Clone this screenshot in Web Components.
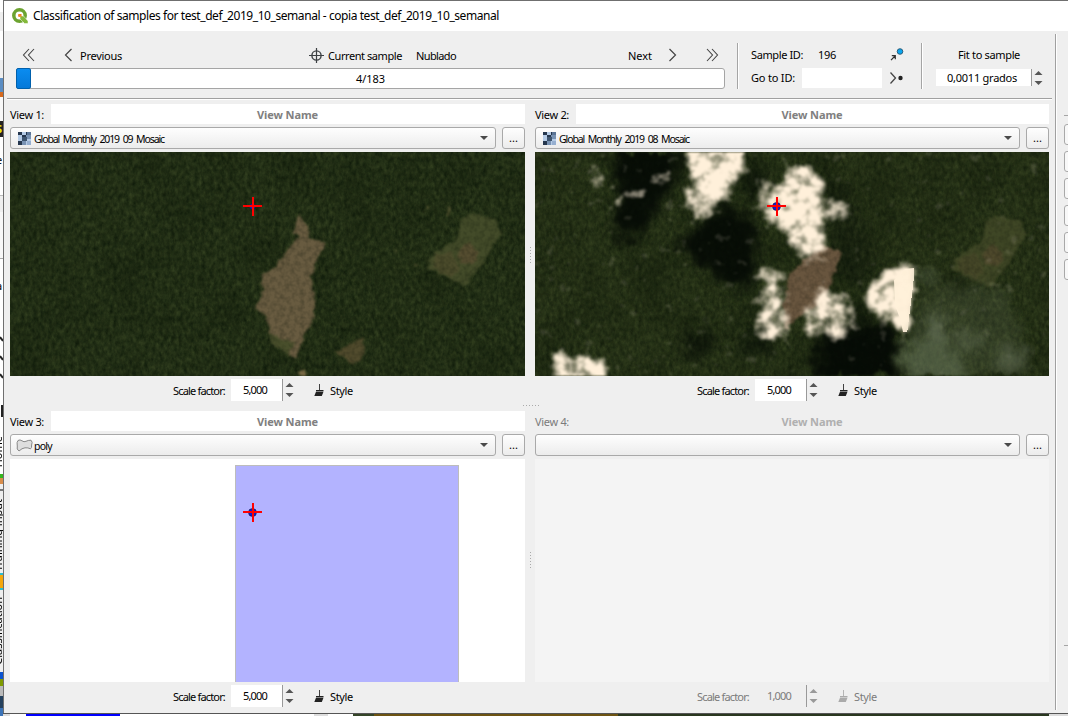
<!DOCTYPE html>
<html lang="en">
<head>
<meta charset="utf-8">
<title>Classification of samples</title>
<style>
html,body{margin:0;width:1068px;height:716px;overflow:hidden}
body{font:11px "Noto Sans","Open Sans",sans-serif;color:#000}
</style>
</head>
<body>
<app-window></app-window>
<script>
const define = (name, html, init) => {
  const t = document.createElement('template');
  t.innerHTML = html;
  customElements.define(name, class extends HTMLElement {
    connectedCallback() {
      if (this.shadowRoot) return;
      this.attachShadow({mode: 'open'}).append(t.content.cloneNode(true));
      if (init) init(this, this.shadowRoot);
    }
  });
};

/* A label whose tracking is adjusted to fill the width in its w attribute. */
define('fit-text', `<style>
:host{display:block;flex:none;white-space:nowrap;line-height:16px}
span{display:inline-block}
</style><span><slot></slot></span>`, (el, root) => {
  const w = +el.getAttribute('w');
  if (!w) return;
  el.style.width = w + 'px';
  const s = root.querySelector('span');
  s.style.letterSpacing = (w - s.getBoundingClientRect().width) / el.textContent.length + 'px';
});

const ICONS = {
  first: [14, 14, '<path d="M7 1 1.5 7 7 13M12 1 6.5 7 12 13" fill="none" stroke="#444" stroke-width="1.1"/>'],
  prev: [9, 14, '<path d="M7.5 1 1.5 7l6 6" fill="none" stroke="#444" stroke-width="1.2"/>'],
  next: [9, 14, '<path d="M1.5 1l6 6-6 6" fill="none" stroke="#444" stroke-width="1.2"/>'],
  last: [14, 14, '<path d="M2 1l5.500 6L2 13M7 1l5.500 6L7 13" fill="none" stroke="#444" stroke-width="1.100"/>'],
  target: [15, 15, '<circle cx="7.500" cy="7.500" r="4.600" fill="none" stroke="#3c4043" stroke-width="1.400"/><path d="M7.500 0v15M0 7.500h15" stroke="#3c4043" stroke-width="1.200"/>'],
  pick: [14, 13, '<circle cx="10" cy="3.500" r="2.800" fill="#0aa5ef" stroke="#24546e" stroke-width=".9"/><path d="M1 12.200 5 8M1.800 7.700h3.500v3.600" fill="none" stroke="#333" stroke-width="1.200"/>'],
  go: [15, 14, '<path d="M1.500 1.500 6.500 7l-5 5.500" fill="none" stroke="#444" stroke-width="1.300"/><circle cx="11.500" cy="7" r="2.200" fill="#222"/>'],
  brush: [11, 14, '<path d="M5 1h1v6H5z" fill="currentColor" opacity=".85"/><path d="M2 7h7.500v1.200H2zM2 8.700h7.500L7.800 13H.3z" fill="currentColor"/>'],
  arrows: [9, 16, '<path d="M.5 5 4.500 1l4 4zM.5 11l4 4 4-4z" fill="currentColor"/>'],
  raster: [13, 13, '<path d="M0 0h13v13H0z" fill="#b5cbe6"/><path d="M0 0h4v3H0zM8 0h5v3H8zM0 9h4v4H0zM4 3h4v3H4z" fill="#26374e"/><path d="M8 3h5v4H8zM4 8h4v5H4z" fill="#7892b3"/><path d="M4 5h5v4H4z" fill="#3d546f"/><path d="M9 0h4v3H9z" fill="#5b7596"/><path d="M9 9h4v4H9z" fill="#96afd0"/>'],
  polygon: [17, 13, '<path d="M2 1.500Q4 .2 6 1.800T10 2.300T15 1.200Q17 3 15.600 6Q16 9 14.500 9.800Q12 8.500 9 8.800T3 12Q.3 10.500 1.300 7Q.5 3 2 1.500Z" fill="#dedede" stroke="#888"/>'],
  qgis: [16, 16, '<circle cx="7.500" cy="7.500" r="5.700" fill="none" stroke="#6ca330" stroke-width="3.500"/><path d="M8 8h3.500L16 13v2.500h-3.500L8 11z" fill="#84b93b" stroke="#fff" stroke-width=".5"/><path d="M6 6h3.500v3.500z" fill="#ee7913"/><circle cx="7.500" cy="7.400" r="1.500" fill="#f08a25"/>']
};
define('ui-icon', '<style>:host{display:block;flex:none}svg{display:block}</style>', (el, root) => {
  const [w, h, body] = ICONS[el.getAttribute('name')];
  root.innerHTML += `<svg width="${w}" height="${h}" viewBox="0 0 ${w} ${h}">${body}</svg>`;
});

define('spin-box', `<style>
:host{display:flex;align-items:center;flex:none}
div{display:flex;align-items:center;justify-content:center;height:100%;box-sizing:border-box;flex:1;background:#fff;border-right:1px solid #999;padding-right:3px}
ui-icon{margin-left:2px;color:#555}
:host([off]) div{background:none}
:host([off]) ui-icon{color:#999}
</style><div><slot></slot></div><ui-icon name="arrows"></ui-icon>`);

define('combo-box', `<style>
:host{display:flex;flex:1;align-items:center;box-sizing:border-box;height:22px;border:1px solid #a9a9a9;border-radius:3px;background:linear-gradient(#fefefe,#ececec);padding:0 7px 0 5px;font-size:10.5px;word-spacing:2px}
i{margin-left:auto;border:4px solid transparent;border-top:4px solid #4a4a4a;border-bottom:0}
</style><slot></slot><i></i>`);

/* Red cross over a blue sample point. */
define('sample-marker', `<style>
:host{position:absolute;width:19px;height:19px}svg{display:block}
</style><svg width="19" height="19"><path d="M0 9h19M10 0v19" stroke="#f00" stroke-width="2"/></svg>`,
(el, root) => {
  el.style.left = el.getAttribute('x') + 'px';
  el.style.top = el.getAttribute('y') + 'px';
  root.querySelector('svg').insertAdjacentHTML('afterbegin', `<circle cx="9.500" cy="9.500" r="${el.getAttribute('r')}" fill="#101bd0" stroke="#151540" stroke-width=".6"/>`);
});

const REGION = 'filterUnits="userSpaceOnUse" x="0" y="0" width="515" height="224" color-interpolation-filters="sRGB"';
const FILTERS = `<defs>
<filter id="forest" ${REGION}><feTurbulence type="fractalNoise" baseFrequency=".26 .17" numOctaves="3" seed="8"/><feColorMatrix values=".14 .06 0 0 .043  .14 .07 0 0 .088  .08 .04 0 0 .030  0 0 0 0 1"/></filter>
<filter id="broad" ${REGION}><feTurbulence type="fractalNoise" baseFrequency=".022" numOctaves="3" seed="21"/><feColorMatrix values="0 0 0 0 .02  0 0 0 0 .05  0 0 0 0 .01  1.800 0 0 0 -.75"/></filter>
<filter id="grain" ${REGION}><feTurbulence type="fractalNoise" baseFrequency=".2" numOctaves="2" seed="3"/><feColorMatrix values="0 0 0 0 0  0 0 0 0 0.030  0 0 0 0 0  1.500 0 0 0 -.55"/></filter>
<filter id="rough" ${REGION}><feTurbulence type="fractalNoise" baseFrequency=".14" numOctaves="3" seed="5"/><feDisplacementMap in="SourceGraphic" scale="7" xChannelSelector="R" yChannelSelector="G"/><feGaussianBlur stdDeviation=".8"/></filter>
<filter id="cloud" ${REGION}><feTurbulence type="fractalNoise" baseFrequency=".085" numOctaves="3" seed="11"/><feColorMatrix values="0 0 0 0 0  0 0 0 0 0  0 0 0 0 0  1.900 0 0 0 -.450" result="n"/><feGaussianBlur in="SourceAlpha" stdDeviation="4"/><feComposite operator="arithmetic" in2="n" k2="1.400" k3="1" k4="-.880"/><feGaussianBlur stdDeviation=".8" result="m"/><feFlood flood-color="#fff0da"/><feComposite operator="in" in2="m"/></filter>
<filter id="soft" ${REGION}><feGaussianBlur in="SourceGraphic" stdDeviation="6" result="b"/><feTurbulence type="fractalNoise" baseFrequency=".07" numOctaves="3" seed="4"/><feDisplacementMap in="b" scale="22" xChannelSelector="R" yChannelSelector="G"/><feGaussianBlur stdDeviation="1"/></filter>
</defs>`;
const FIELDS = `<path fill="#434b29" d="M750 98l85 22 5 40-50 90-55 65-55-20-55-30 5-40 80-45 10-50z"/><path fill="#5a4d32" opacity=".8" d="M745 185l30 35-15 30-40-5-5-35z"/><path fill="#544c2d" opacity=".5" d="M640 225l60-10 20 60-30 20-50-30z"/>`;
const SCENES = {
  clear: `<rect width="515" height="224" filter="url(#forest)"/><rect width="515" height="224" filter="url(#broad)" opacity=".25"/>
<g filter="url(#rough)"><g transform="translate(210 28) scale(.3333)">
<path fill="#685b40" d="M240 105l25 35v38l52 10-25 50-20 60 13 70v42l-40 70-13 50-32-5-45-35-15-80-32-20 20-70-3-35 40-20 50-75 25-20-20-20z"/>
<path fill="#484e2b" d="M145 455l50 25 30 10-25 35-45-35z"/>${FIELDS}
<path fill="#514b2d" d="M350 515l50-25 35-18-10 73-30 5z"/><path fill="#8f7b52" d="M238 575l20-6v19h-15z"/><path d="M690 85l-5 20M520 220l15-10M585 255h10M620 80v10" stroke="#5a5733" stroke-width="6"/></g></g>
<rect width="515" height="224" filter="url(#grain)" opacity=".3"/>`,
  cloudy: `<rect width="515" height="224" filter="url(#forest)"/><rect width="515" height="224" fill="#3a431c" opacity=".14"/><rect width="515" height="224" filter="url(#broad)" opacity=".35"/>
<g filter="url(#soft)" fill="#050b05"><path opacity=".92" d="M74-14h70v40l-18 22-12 26-28 20-10-24 8-22z"/><path opacity=".92" d="M140 92l48-40 28 12 8 32-4 36-26 5-20-18z"/><ellipse cx="163" cy="192" rx="17" ry="14" opacity=".65"/><path opacity=".95" d="M280 186l42-14 42 4v60h-84z"/><path opacity=".6" d="M196 190l40-18 6 25-25 12zM205 20l30-5-5 22-20 12zM318 148h12v30h-14z"/><path opacity=".35" d="M286 20l30 15 25 70-10 30-35-10z"/></g>
<g filter="url(#rough)"><path fill="#68553e" d="M286 92l20 8-8 25-10 26-24 14-14 12-2-24 6-30z"/><g transform="translate(210 30) scale(.3333)" opacity=".85">${FIELDS}</g></g>
<rect width="515" height="224" filter="url(#grain)" opacity=".25"/>
<g filter="url(#cloud)">
<path d="M150-16h61l-3 36-12 17-4 10-14 4-8-4-10-14-8-20z"/>
<path opacity=".78" d="M146 34l16 0 20 12 2 10-12 12-10 2-8-14-10-10z"/>
<path opacity=".68" d="M220 34l24-2 10 20-6 22-22-4z"/>
<path d="M242 34l24-24 20 15 6 24-8 10 4 14 4 18-12 18-20-10-10-20-16-14 2-20z"/>
<path opacity=".7" d="M284 48l30 4-2 16-26 0zM224 114l20 2 5 22-4 20-20-4z"/>
<path opacity=".85" d="M222 154l26-2 6 20-12 20-20-8z"/>
<path opacity=".76" d="M278 141l20-6 20 16 2 34-20 3-17-10-16 7 0-20z"/>
<path opacity=".95" d="M18 196l8 4 4 10 20-6 18 2 10 24H17z"/>
<path d="M334 134l17-19 27-5 3 27-7 41-12 4-7-16-14-3-10-12z"/>
<path opacity=".55" d="M112 14l24 0 4 16-18 2zM76 36l12 2 4 16-10 2zM56 10l10 0 4 36-12 0zM96 34l12 0 0 14-10 0z"/></g>
<path fill="#fff0da" opacity=".96" d="M370 117l9-1v13h-1v9h-1v8h-1v8h-1v8h-1v8h-1v8h-1v2h-4l-3-14-5-12-1-26z"/>
<g filter="url(#soft)" fill="#7e8a70"><path opacity=".18" d="M388 142l45-10 40 8 20 75-82 18-51-12z"/><path opacity=".5" d="M391 162l16 3 6 25-20 4z"/><path opacity=".36" d="M366 192l34-2 26 15 6 29h-58z"/><path opacity=".34" d="M422 180l24 1-5 18-22-6zM463 193l30 6-5 27-27-6zM380 118l28 4-2 10-26-3z"/></g>`
};
define('map-scene', '<style>:host{display:block}svg{display:block}</style>', (el, root) => {
  root.innerHTML += `<svg width="515" height="224">${FILTERS}${SCENES[el.getAttribute('name')]}</svg>`;
});
define('polygon-layer', `<style>:host{display:block;height:100%;padding:6px 0 0 225px;box-sizing:border-box}
div{width:224px;height:100%;box-sizing:border-box;background:#b3b3ff;border:1px solid #bdbdbc;border-bottom:0}</style><div></div>`);

define('view-panel', `<style>
:host{display:flex;flex-direction:column;min-width:0;gap:3px}
.name,.layer,.foot{display:flex;align-items:center}
.name{height:20px}
.title{flex:1;height:20px;display:flex;align-items:center;justify-content:center;background:#fff;color:#808080;font:bold 11px "Noto Sans",sans-serif;padding:1px 1px 0 0;box-sizing:border-box}
.name>fit-text{margin:2px 7px 0 0}
.layer{height:22px;gap:6px}
.more{width:23px;height:22px;box-sizing:border-box;border:1px solid #a9a9a9;border-radius:3px;background:linear-gradient(#fefefe,#ececec);display:flex;justify-content:center;line-height:19px}
.map{position:relative;height:var(--map-h,224px);overflow:hidden;background:#fff}
.foot{height:22px;padding-left:var(--foot-x,163px)}
.foot>fit-text{margin-top:1px}
.foot spin-box{width:63px;height:22px;margin-left:6px}
.foot ui-icon{margin-left:20px;color:#222}
.foot fit-text.s{margin-left:5px}
:host([off]) .title{background:none;color:#b0b0b0}
:host([off]) .name,:host([off]) .foot{color:#7b7b7b}
:host([off]) .map{background:#f4f4f4}
:host([off]) .foot ui-icon{color:#aaa}
</style>
<div class="name"><fit-text class="n" w="34"></fit-text><div class="title"><fit-text w="61">View Name</fit-text></div></div>
<div class="layer"><combo-box></combo-box><div class="more">...</div></div>
<div class="map"><slot></slot></div>
<div class="foot"><fit-text w="52">Scale factor:</fit-text><spin-box><fit-text w="24" class="v"></fit-text></spin-box><ui-icon name="brush"></ui-icon><fit-text class="s" w="23">Style</fit-text></div>`,
(el, root) => {
  const a = n => el.getAttribute(n);
  const put = (sel, text) => {
    const old = root.querySelector(sel), f = document.createElement('fit-text');
    f.className = old.className; f.setAttribute('w', old.getAttribute('w')); f.textContent = text;
    old.replaceWith(f);
  };
  put('.n', a('label'));
  put('.v', a('scale'));
  const r = a('icon') === 'raster';
  if (a('layer')) root.querySelector('combo-box').innerHTML =
    `<ui-icon name="${a('icon')}" style="margin-left:${r ? 2 : 0}px"></ui-icon><fit-text w="${a('lw')}" style="margin:1px 0 0 ${r ? 3 : 1}px">${a('layer')}</fit-text>`;
  if (el.hasAttribute('off')) root.querySelector('spin-box').setAttribute('off', '');
});

define('sample-nav', `<style>
:host{display:flex;height:67px;box-sizing:border-box;padding:12px 0 0 9px}
.left{width:709px}
.row{display:flex;height:25px;align-items:center}
.bar{height:21px;box-sizing:border-box;border:1px solid #a5a5a5;border-radius:3px;background:#fff;display:flex;align-items:center;justify-content:center;position:relative}
.bar i{position:absolute;left:-1px;top:-1px;width:15px;height:21px;box-sizing:border-box;border:1px solid #0060ac;border-radius:2px;background:linear-gradient(#0a8cf0,#0579d9)}
.sep{width:1px;height:46px;background:#a5a5a5;border-right:1px solid #fff;margin-left:12px}
.ids{width:153px;margin-left:12px}
.ids .row{height:24px}
.ids .row+.row{height:22px}
.input{flex:none;width:80px;height:20px;background:#fff;margin:-1px 0 0 7px}
.fit{margin-left:13px;display:flex;flex-direction:column;width:108px}
.fit spin-box{height:17px;width:107px;margin-top:2px}
</style>
<div class="left"><div class="row"><ui-icon name="first" style="margin:-1px 0 0 6px"></ui-icon><ui-icon name="prev" style="margin:-1px 0 0 28px"></ui-icon><fit-text w="42" style="margin-left:7px">Previous</fit-text><ui-icon name="target" style="margin:-1px 0 0 187px"></ui-icon><fit-text w="74" style="margin-left:4px">Current sample</fit-text><fit-text w="40" style="margin-left:14px">Nublado</fit-text><fit-text w="24" style="margin-left:172px">Next</fit-text><ui-icon name="next" style="margin:-1px 0 0 16px"></ui-icon><ui-icon name="last" style="margin:-1px 0 0 28px"></ui-icon></div>
<div class="bar"><i></i><fit-text w="29">4/183</fit-text></div></div>
<div class="sep"></div>
<div class="ids"><div class="row"><fit-text w="52">Sample ID:</fit-text><fit-text w="18" style="margin-left:15px">196</fit-text><ui-icon name="pick" style="margin:-2px 0 0 54px"></ui-icon></div><div class="row"><fit-text w="44">Go to ID:</fit-text><div class="input"></div><ui-icon name="go" style="margin:-1px 0 0 7px"></ui-icon></div></div>
<div class="sep" style="margin-left:17px"></div>
<div class="fit"><div class="row" style="height:24px"><fit-text w="62" style="margin-left:22px">Fit to sample</fit-text></div><spin-box><fit-text w="70">0,0011 grados</fit-text></spin-box></div>`);

/* Slice of the main window visible left of the dialog. */
define('back-strip', `<style>
:host{display:block;position:relative;width:3px;height:716px;overflow:hidden;background:linear-gradient(#fff 0 12px,#efefef 12px 31px,#fff 31px 60px,#efefef 60px 78px,#5b8dc3 78px 92px,#d66a1e 92px 97px,#f8f8f8 97px 121px,#222 121px 137px,#fff 137px 195px,#bbb 195px 196px,#efefef 196px 212px,#f8f8f8 212px 258px,#aaa 258px 259px,#fff 259px 474px,#32b51e 474px 478px,#d98d4b 478px 484px,#efefef 484px 489px,#777 489px 491px,#efefef 491px 573px,#2bbdd0 573px 575px,#f5a70b 575px 588px,#2bbdd0 588px 590px,#efefef 590px 672px,#0b53d0 672px 679px,#7f9b00 679px 686px,#bbb 686px 696px,#25415e 696px 708px,#3c74b8 708px)}
span{position:absolute;left:-9px;writing-mode:vertical-rl;transform:rotate(180deg);line-height:13px;white-space:nowrap}
b{position:absolute;left:-4px;font-weight:normal}
svg{position:absolute;left:0;top:330px}
</style><b style="top:152px">e</b><b style="top:278px">a</b><b style="top:121px;color:#ee0;font-weight:bold">S</b>
<svg width="3" height="90"><path d="M0 7l3 4M0 26l3 4M0 44l3 4M2 75v12" stroke="#222" stroke-width="2"/></svg>
<span style="top:436px">Home</span><span style="top:499px">Training input</span><span style="top:597px">Classification</span>`);

define('side-tools', `<style>
:host{display:block;overflow:hidden;padding-top:84px}
hr{margin:0 0 8px;border:0;border-top:1px solid #a5a5a5}
div{width:20px;height:19px;border:1px solid #a9a9a9;border-radius:3px;background:#f8f8f8;margin-bottom:6px;box-sizing:content-box}
</style><hr><div></div><div></div><div></div><div></div><div></div><div></div><hr style="margin-top:365px">`);

define('app-window', `<style>
:host{display:grid;grid-template:713px 3px / 3px 1065px;width:1068px;height:716px}
.win{box-sizing:border-box;border:solid #6f6f6f;border-width:1px 0 0 1px;background:#efefef;display:flex;flex-direction:column}
.title{height:30px;background:#fff;display:flex;align-items:center;font-size:12px}
.title ui-icon{margin:0 5px 0 8px}
.body{display:flex;flex:1;min-height:0}
.main{width:1051px;box-sizing:border-box;padding-left:3px}
.line{height:1px;background:#a0a0a0;border-bottom:1px solid #fff;width:1045px}
.views{position:relative;display:grid;grid-template-columns:515px 514px;column-gap:10px;row-gap:10px;padding:4px 0 0 3px}
.views view-panel:nth-of-type(n+3){--map-h:223px}
.views view-panel:nth-of-type(even){--foot-x:162px}
.v{width:1px;background:#a0a0a0;margin-top:3px;border-right:1px solid #fff;height:676px}
side-tools{width:4px;margin-left:auto}
.d{position:absolute;background:repeating-linear-gradient(90deg,#aaa 0 1px,transparent 1px 3px)}
.d.h{left:516px;top:305px;width:16px;height:1px}
.d.u{left:523px;width:1px;height:16px;background:repeating-linear-gradient(#aaa 0 1px,transparent 1px 3px)}
back-strip{grid-row:1/3}
.below{border-top:1px solid #555;background:linear-gradient(90deg,#ddd 0 7px,#fff 7px 23px,#00f 23px 117px,#fff 117px 311px,#ddd 311px 325px,#fff 325px 350px,#354528 350px 371px,#6c5312 371px 615px,#29371f 615px 1046px,#ddd 1046px)}
</style>
<back-strip></back-strip>
<div class="win">
<div class="title"><ui-icon name="qgis"></ui-icon><fit-text w="466">Classification of samples for test_def_2019_10_semanal - copia test_def_2019_10_semanal</fit-text></div>
<div class="body"><div class="main"><sample-nav></sample-nav><div class="line"></div>
<div class="views">
<view-panel label="View 1:" layer="Global Monthly 2019 09 Mosaic" icon="raster" lw="130" scale="5,000"><map-scene name="clear"></map-scene><sample-marker x="233" y="45" r="2.8"></sample-marker></view-panel>
<view-panel label="View 2:" layer="Global Monthly 2019 08 Mosaic" icon="raster" lw="130" scale="5,000"><map-scene name="cloudy"></map-scene><sample-marker x="232" y="45" r="4"></sample-marker></view-panel>
<view-panel label="View 3:" layer="poly" icon="polygon" lw="18" scale="5,000"><polygon-layer></polygon-layer><sample-marker x="233" y="44" r="4"></sample-marker></view-panel>
<view-panel off label="View 4:" scale="1,000"></view-panel>
<div class="d h"></div><div class="d u" style="top:147px"></div><div class="d u" style="top:452px"></div>
</div></div><div class="v"></div><side-tools></side-tools></div>
</div>
<div class="below"></div>`);
</script>
</body>
</html>
